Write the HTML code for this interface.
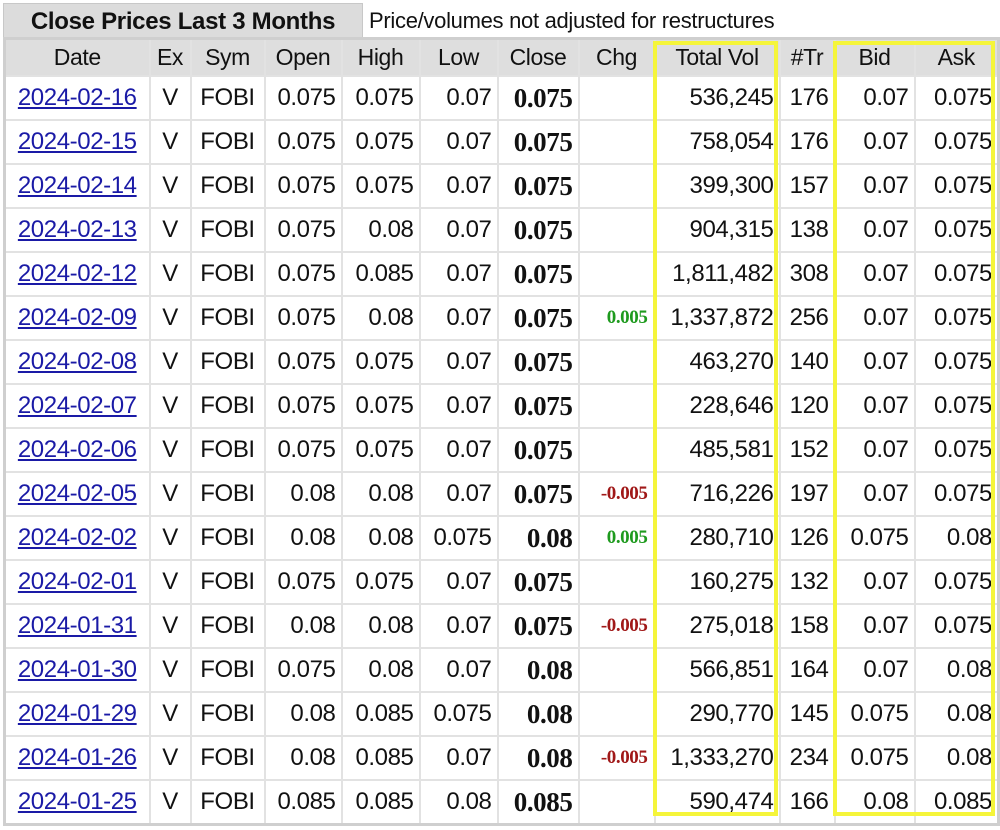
<!DOCTYPE html>
<html><head><meta charset="utf-8"><style>
body{margin:0;background:#fff;width:1000px;height:830px;overflow:hidden;position:relative;font-family:"Liberation Sans",sans-serif;}
.tab{position:absolute;left:3px;top:3px;width:358px;height:35px;background:#dcdcdc;border:1px solid #c8c8c8;border-bottom:none;font-weight:bold;font-size:24px;line-height:35px;text-align:center;color:#111;letter-spacing:-0.3px;}
.note{position:absolute;left:369px;top:3px;font-size:22px;line-height:35px;color:#111;letter-spacing:-0.3px;}
table{position:absolute;left:3px;top:37px;border-collapse:collapse;table-layout:fixed;width:994px;border:3px solid #cfcfcf;}
td,th{border:2px solid #e2e2e2;height:42px;padding:0 5px 0 0;font-size:24px;text-align:right;color:#111;white-space:nowrap;overflow:hidden;letter-spacing:-0.4px;}
th{background:#dedede;font-weight:normal;text-align:center;height:35px;padding:0;font-size:23px;}
td.d{text-align:center;padding:0}
td.d a{color:#1a1aa6;text-decoration:underline;}
td.c{text-align:center;padding:0}
td.cl{font-family:"Liberation Serif",serif;font-weight:bold;font-size:27px;}
td.g{font-family:"Liberation Serif",serif;font-weight:bold;font-size:19px;color:#1e9a1e;padding-right:6px;}
td.r{font-family:"Liberation Serif",serif;font-weight:bold;font-size:19px;color:#a01818;padding-right:6px;}
.yb{position:absolute;border:4px solid #f5f53a;box-sizing:border-box;}
</style></head><body>
<div class="tab">Close Prices Last 3 Months</div>
<div class="note">Price/volumes not adjusted for restructures</div>
<table>
<colgroup><col style="width:145px"><col style="width:41px"><col style="width:74px"><col style="width:77px"><col style="width:78px"><col style="width:78px"><col style="width:81px"><col style="width:76px"><col style="width:125px"><col style="width:55px"><col style="width:80px"><col style="width:84px"></colgroup>
<tr><th>Date</th><th>Ex</th><th>Sym</th><th>Open</th><th>High</th><th>Low</th><th>Close</th><th>Chg</th><th>Total Vol</th><th>#Tr</th><th>Bid</th><th>Ask</th></tr>
<tr><td class="d"><a>2024-02-16</a></td><td class="c">V</td><td class="c">FOBI</td><td>0.075</td><td>0.075</td><td>0.07</td><td class="cl">0.075</td><td></td><td>536,245</td><td>176</td><td>0.07</td><td>0.075</td></tr>
<tr><td class="d"><a>2024-02-15</a></td><td class="c">V</td><td class="c">FOBI</td><td>0.075</td><td>0.075</td><td>0.07</td><td class="cl">0.075</td><td></td><td>758,054</td><td>176</td><td>0.07</td><td>0.075</td></tr>
<tr><td class="d"><a>2024-02-14</a></td><td class="c">V</td><td class="c">FOBI</td><td>0.075</td><td>0.075</td><td>0.07</td><td class="cl">0.075</td><td></td><td>399,300</td><td>157</td><td>0.07</td><td>0.075</td></tr>
<tr><td class="d"><a>2024-02-13</a></td><td class="c">V</td><td class="c">FOBI</td><td>0.075</td><td>0.08</td><td>0.07</td><td class="cl">0.075</td><td></td><td>904,315</td><td>138</td><td>0.07</td><td>0.075</td></tr>
<tr><td class="d"><a>2024-02-12</a></td><td class="c">V</td><td class="c">FOBI</td><td>0.075</td><td>0.085</td><td>0.07</td><td class="cl">0.075</td><td></td><td>1,811,482</td><td>308</td><td>0.07</td><td>0.075</td></tr>
<tr><td class="d"><a>2024-02-09</a></td><td class="c">V</td><td class="c">FOBI</td><td>0.075</td><td>0.08</td><td>0.07</td><td class="cl">0.075</td><td class="g">0.005</td><td>1,337,872</td><td>256</td><td>0.07</td><td>0.075</td></tr>
<tr><td class="d"><a>2024-02-08</a></td><td class="c">V</td><td class="c">FOBI</td><td>0.075</td><td>0.075</td><td>0.07</td><td class="cl">0.075</td><td></td><td>463,270</td><td>140</td><td>0.07</td><td>0.075</td></tr>
<tr><td class="d"><a>2024-02-07</a></td><td class="c">V</td><td class="c">FOBI</td><td>0.075</td><td>0.075</td><td>0.07</td><td class="cl">0.075</td><td></td><td>228,646</td><td>120</td><td>0.07</td><td>0.075</td></tr>
<tr><td class="d"><a>2024-02-06</a></td><td class="c">V</td><td class="c">FOBI</td><td>0.075</td><td>0.075</td><td>0.07</td><td class="cl">0.075</td><td></td><td>485,581</td><td>152</td><td>0.07</td><td>0.075</td></tr>
<tr><td class="d"><a>2024-02-05</a></td><td class="c">V</td><td class="c">FOBI</td><td>0.08</td><td>0.08</td><td>0.07</td><td class="cl">0.075</td><td class="r">-0.005</td><td>716,226</td><td>197</td><td>0.07</td><td>0.075</td></tr>
<tr><td class="d"><a>2024-02-02</a></td><td class="c">V</td><td class="c">FOBI</td><td>0.08</td><td>0.08</td><td>0.075</td><td class="cl">0.08</td><td class="g">0.005</td><td>280,710</td><td>126</td><td>0.075</td><td>0.08</td></tr>
<tr><td class="d"><a>2024-02-01</a></td><td class="c">V</td><td class="c">FOBI</td><td>0.075</td><td>0.075</td><td>0.07</td><td class="cl">0.075</td><td></td><td>160,275</td><td>132</td><td>0.07</td><td>0.075</td></tr>
<tr><td class="d"><a>2024-01-31</a></td><td class="c">V</td><td class="c">FOBI</td><td>0.08</td><td>0.08</td><td>0.07</td><td class="cl">0.075</td><td class="r">-0.005</td><td>275,018</td><td>158</td><td>0.07</td><td>0.075</td></tr>
<tr><td class="d"><a>2024-01-30</a></td><td class="c">V</td><td class="c">FOBI</td><td>0.075</td><td>0.08</td><td>0.07</td><td class="cl">0.08</td><td></td><td>566,851</td><td>164</td><td>0.07</td><td>0.08</td></tr>
<tr><td class="d"><a>2024-01-29</a></td><td class="c">V</td><td class="c">FOBI</td><td>0.08</td><td>0.085</td><td>0.075</td><td class="cl">0.08</td><td></td><td>290,770</td><td>145</td><td>0.075</td><td>0.08</td></tr>
<tr><td class="d"><a>2024-01-26</a></td><td class="c">V</td><td class="c">FOBI</td><td>0.08</td><td>0.085</td><td>0.07</td><td class="cl">0.08</td><td class="r">-0.005</td><td>1,333,270</td><td>234</td><td>0.075</td><td>0.08</td></tr>
<tr><td class="d"><a>2024-01-25</a></td><td class="c">V</td><td class="c">FOBI</td><td>0.085</td><td>0.085</td><td>0.08</td><td class="cl">0.085</td><td></td><td>590,474</td><td>166</td><td>0.08</td><td>0.085</td></tr>
</table>
<div class="yb" style="left:653px;top:41px;width:125px;height:775px"></div>
<div class="yb" style="left:833px;top:41px;width:162px;height:775px"></div>
</body></html>
